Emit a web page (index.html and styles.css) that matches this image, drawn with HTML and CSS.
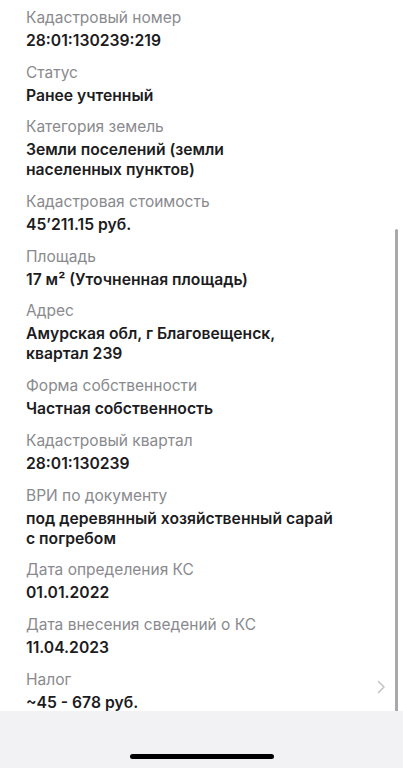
FILE: index.html
```html
<!DOCTYPE html>
<html lang="ru">
<head>
    <meta charset="UTF-8">
    <meta name="viewport" content="width=device-width, initial-scale=1.0">
    <title>Сведения об участке</title>
    <link rel="stylesheet" href="styles.css">
</head>
<body>
    <div class="screen">
        <div class="content">
            <div class="item">
                <div class="label">Кадастровый номер</div>
                <div class="value">28:01:130239:219</div>
            </div>
            <div class="item">
                <div class="label">Статус</div>
                <div class="value">Ранее учтенный</div>
            </div>
            <div class="item">
                <div class="label">Категория земель</div>
                <div class="value">Земли поселений (земли<br>населенных пунктов)</div>
            </div>
            <div class="item">
                <div class="label">Кадастровая стоимость</div>
                <div class="value">45’211.15 руб.</div>
            </div>
            <div class="item">
                <div class="label">Площадь</div>
                <div class="value">17 м² (Уточненная площадь)</div>
            </div>
            <div class="item">
                <div class="label">Адрес</div>
                <div class="value">Амурская обл, г Благовещенск,<br>квартал 239</div>
            </div>
            <div class="item">
                <div class="label">Форма собственности</div>
                <div class="value">Частная собственность</div>
            </div>
            <div class="item">
                <div class="label">Кадастровый квартал</div>
                <div class="value">28:01:130239</div>
            </div>
            <div class="item">
                <div class="label">ВРИ по документу</div>
                <div class="value">под деревянный хозяйственный сарай<br>с погребом</div>
            </div>
            <div class="item">
                <div class="label">Дата определения КС</div>
                <div class="value">01.01.2022</div>
            </div>
            <div class="item">
                <div class="label">Дата внесения сведений о КС</div>
                <div class="value">11.04.2023</div>
            </div>
            <div class="item item-link">
                <div class="item-text">
                    <div class="label">Налог</div>
                    <div class="value">~45 - 678 руб.</div>
                </div>
                <svg class="chevron" width="9" height="14" viewBox="0 0 9 14">
                    <path d="M1.5 1.5 L7 7 L1.5 12.5" fill="none" stroke="#c4c4c7" stroke-width="1.6" stroke-linecap="round" stroke-linejoin="round"/>
                </svg>
            </div>
            <div class="scrollbar"></div>
        </div>
        <div class="bottom">
            <div class="home-indicator"></div>
        </div>
    </div>
</body>
</html>
```

FILE: styles.css
```css
body {
    margin: 0;
    padding: 0;
    font-family: 'Inter', 'Liberation Sans', sans-serif;
    background: #fff;
}

.screen {
    width: 403px;
    height: 768px;
    display: flex;
    flex-direction: column;
    overflow: hidden;
}

.content {
    position: relative;
    height: 711px;
    overflow: hidden;
    padding: 8px 0 0 26px;
    box-sizing: border-box;
}

.item {
    padding-bottom: 11.7px;
}

.label {
    font-size: 15.5px;
    line-height: 20px;
    color: #8a8a8e;
    margin-bottom: 3px;
}

.value {
    font-size: 15.7px;
    line-height: 20px;
    font-weight: 600;
    color: #1c1c1e;
}

.item-link {
    display: flex;
    align-items: center;
}

.item-text {
    flex: 1;
}

.chevron {
    margin: 0 17px 8px 0;
}

.scrollbar {
    position: absolute;
    right: 5px;
    top: 229px;
    width: 3px;
    height: 490px;
    border-radius: 2px;
    background: #a9a9ab;
}

.bottom {
    flex: 1;
    background: #f2f2f5;
    display: flex;
    justify-content: center;
    align-items: flex-end;
    padding-bottom: 9px;
}

.home-indicator {
    width: 144px;
    height: 5px;
    border-radius: 3px;
    background: #000;
}
```
